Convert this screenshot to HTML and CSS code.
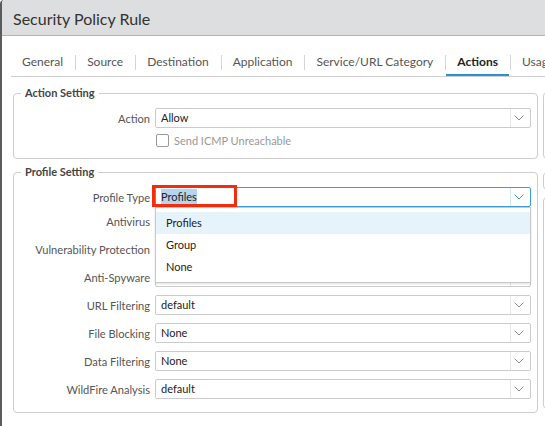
FILE: index.html
```
<!DOCTYPE html>
<html>
<head>
<meta charset="utf-8">
<link rel="stylesheet" href="styles.css">
</head>
<body>
<div class="dialog">
  <div class="header"><h1 class="title">Security Policy Rule</h1></div>
  <div class="tabs">
    <span class="tab">General</span><span class="sep"></span>
    <span class="tab">Source</span><span class="sep"></span>
    <span class="tab">Destination</span><span class="sep"></span>
    <span class="tab">Application</span><span class="sep"></span>
    <span class="tab">Service/URL Category</span><span class="sep"></span>
    <span class="tab tab-active">Actions</span><span class="sep"></span>
    <span class="tab">Usage</span>
  </div>
  <div class="content">
    <div class="col-main">
      <fieldset class="group group-action">
        <legend class="legend">Action Setting</legend>
        <div class="form">
          <div class="row">
            <label class="label">Action</label>
            <div class="control">
              <div class="select"><span class="select-value">Allow</span><span class="select-arrow"><svg width="10" height="6" viewBox="0 0 10 6"><polyline points="0.5,0.5 5,5 9.5,0.5" fill="none" stroke="#8a8a8a" stroke-width="1"/></svg></span></div>
            </div>
          </div>
          <div class="row row-check">
            <span class="label"></span>
            <div class="control check"><span class="checkbox"></span><span class="check-text">Send ICMP Unreachable</span></div>
          </div>
        </div>
      </fieldset>
      <fieldset class="group group-profile">
        <legend class="legend">Profile Setting</legend>
        <div class="form">
          <div class="row row-type">
            <label class="label">Profile Type</label>
            <div class="control">
              <div class="select select-active"><span class="select-value"><span class="selected-text">Profiles</span></span><span class="select-arrow"><svg width="10" height="6" viewBox="0 0 10 6"><polyline points="0.5,0.5 5,5 9.5,0.5" fill="none" stroke="#2f9ad8" stroke-width="1"/></svg></span></div>
              <div class="highlight"></div>
              <ul class="menu">
                <li class="menu-item menu-item-hover">Profiles</li>
                <li class="menu-item">Group</li>
                <li class="menu-item">None</li>
              </ul>
            </div>
          </div>
          <div class="rows">
            <div class="row">
              <label class="label">Antivirus</label>
              <div class="control"><div class="select"><span class="select-value"></span><span class="select-arrow"><svg width="10" height="6" viewBox="0 0 10 6"><polyline points="0.5,0.5 5,5 9.5,0.5" fill="none" stroke="#8a8a8a" stroke-width="1"/></svg></span></div></div>
            </div>
            <div class="row">
              <label class="label">Vulnerability Protection</label>
              <div class="control"><div class="select"><span class="select-value"></span><span class="select-arrow"><svg width="10" height="6" viewBox="0 0 10 6"><polyline points="0.5,0.5 5,5 9.5,0.5" fill="none" stroke="#8a8a8a" stroke-width="1"/></svg></span></div></div>
            </div>
            <div class="row">
              <label class="label">Anti-Spyware</label>
              <div class="control"><div class="select"><span class="select-value"></span><span class="select-arrow"><svg width="10" height="6" viewBox="0 0 10 6"><polyline points="0.5,0.5 5,5 9.5,0.5" fill="none" stroke="#8a8a8a" stroke-width="1"/></svg></span></div></div>
            </div>
            <div class="row">
              <label class="label">URL Filtering</label>
              <div class="control"><div class="select"><span class="select-value">default</span><span class="select-arrow"><svg width="10" height="6" viewBox="0 0 10 6"><polyline points="0.5,0.5 5,5 9.5,0.5" fill="none" stroke="#8a8a8a" stroke-width="1"/></svg></span></div></div>
            </div>
            <div class="row">
              <label class="label">File Blocking</label>
              <div class="control"><div class="select"><span class="select-value">None</span><span class="select-arrow"><svg width="10" height="6" viewBox="0 0 10 6"><polyline points="0.5,0.5 5,5 9.5,0.5" fill="none" stroke="#8a8a8a" stroke-width="1"/></svg></span></div></div>
            </div>
            <div class="row">
              <label class="label">Data Filtering</label>
              <div class="control"><div class="select"><span class="select-value">None</span><span class="select-arrow"><svg width="10" height="6" viewBox="0 0 10 6"><polyline points="0.5,0.5 5,5 9.5,0.5" fill="none" stroke="#8a8a8a" stroke-width="1"/></svg></span></div></div>
            </div>
            <div class="row">
              <label class="label">WildFire Analysis</label>
              <div class="control"><div class="select"><span class="select-value">default</span><span class="select-arrow"><svg width="10" height="6" viewBox="0 0 10 6"><polyline points="0.5,0.5 5,5 9.5,0.5" fill="none" stroke="#8a8a8a" stroke-width="1"/></svg></span></div></div>
            </div>
          </div>
        </div>
      </fieldset>
    </div>
    <div class="col-side">
      <div class="side-box side-box-1"></div>
      <div class="side-box side-box-2"></div>
      <div class="side-box side-box-3"></div>
    </div>
  </div>
</div>
</body>
</html>
```
FILE: styles.css
```
* { box-sizing: border-box; }
html, body { margin: 0; padding: 0; background: #fff; }
body {
  font-family: Lato, "Open Sans", sans-serif;
  color: #333;
  width: 545px;
  height: 426px;
  overflow: hidden;
}
.dialog {
  width: 545px;
  height: 426px;
  border-left: 2px solid #5b5b5b;
  border-top-left-radius: 4px;
  overflow: hidden;
  background: #fff;
}
.header {
  height: 36px;
  background: #dddedf;
  border-bottom: 1px solid #b3b3b3;
  padding: 10px 11px 0;
}
.title {
  margin: 0;
  font-size: 16px;
  line-height: 18px;
  font-weight: 400;
  color: #333;
  white-space: nowrap;
}
.tabs {
  margin-left: 9px;
  padding-top: 18px;
  height: 41px;
  border-bottom: 1px solid #cfcfcf;
  display: flex;
  align-items: flex-start;
  white-space: nowrap;
}
.tab {
  font-size: 12px;
  line-height: 16px;
  padding: 0 11px 4px;
  border-bottom: 2px solid transparent;
  color: #555;
}
.tab-active {
  font-weight: 700;
  color: #222;
  border-bottom-color: #2b8fd6;
}
.sep {
  width: 1px;
  height: 15px;
  background: #d4d4d4;
  margin: 1px 0 0 1px;
  flex: none;
}
.content {
  padding: 9px 0 0 11px;
  display: grid;
  grid-template-columns: 525px 200px;
  column-gap: 5px;
  align-items: start;
}
.col-main {
  display: flex;
  flex-direction: column;
  gap: 6px;
}
.group {
  margin: 0;
  min-width: 0;
  border: 1px solid #cdcdcd;
  border-radius: 4px;
  padding: 0 6px 0 0;
}
.group-action { padding-bottom: 10px; }
.group-profile { padding-bottom: 13px; }
.legend {
  margin-left: 7px;
  padding: 0 4px;
  font-size: 11px;
  line-height: 14px;
  font-weight: 700;
  color: #444;
}
.form {
  padding-top: 8px;
  display: flex;
  flex-direction: column;
}
.rows {
  margin-top: 4px;
  display: flex;
  flex-direction: column;
  gap: 8px;
}
.row {
  display: grid;
  grid-template-columns: 136px 1fr;
  column-gap: 5px;
  align-items: center;
}
.label {
  text-align: right;
  font-size: 11.1px;
  color: #555;
  white-space: nowrap;
}
.control { position: relative; }
.select {
  height: 20px;
  border: 1px solid #cbcbcb;
  border-radius: 2px;
  background: #fff;
  display: flex;
  align-items: stretch;
}
.select-value {
  flex: 1;
  padding-left: 5px;
  font-size: 11px;
  line-height: 18px;
  color: #222;
}
.select-arrow {
  width: 20px;
  border-left: 1px solid #e6e6e6;
  display: flex;
  align-items: center;
  justify-content: center;
  padding-right: 3px;
}
.select-active { border-color: #3b9dd9; }
.select-active .select-arrow { border-left-color: #d6e9f6; }
.selected-text {
  background: #b5d4f3;
  padding: 1px 0;
}
.row-check { margin-top: 5px; }
.check {
  display: flex;
  align-items: center;
  gap: 5px;
  height: 15px;
}
.checkbox {
  width: 13px;
  height: 13px;
  border: 1px solid #999;
  border-radius: 2px;
  margin-left: 1px;
}
.check-text {
  font-size: 11px;
  color: #999;
}
.highlight {
  position: absolute;
  left: -3px;
  top: -2px;
  width: 85px;
  height: 22px;
  border: 3px solid #f22c0c;
}
.menu {
  position: absolute;
  left: 0;
  right: 0;
  top: 100%;
  margin: 0;
  padding: 4px 0;
  list-style: none;
  background: #fff;
  border: 1px solid #c8c8c8;
  box-shadow: 0 1px 2px rgba(0,0,0,0.12);
  z-index: 2;
}
.menu-item {
  height: 22px;
  line-height: 22px;
  padding-left: 10px;
  font-size: 11px;
  color: #222;
}
.menu-item-hover { background: #e6f3fb; }
.col-side {
  display: flex;
  flex-direction: column;
}
.side-box {
  border: 1px solid #cdcdcd;
  border-radius: 4px;
}
.side-box-1 { margin-top: 6px; height: 67px; }
.side-box-2 { margin-top: 13px; height: 18px; }
.side-box-3 { margin-top: 7px; height: 212px; }
```
